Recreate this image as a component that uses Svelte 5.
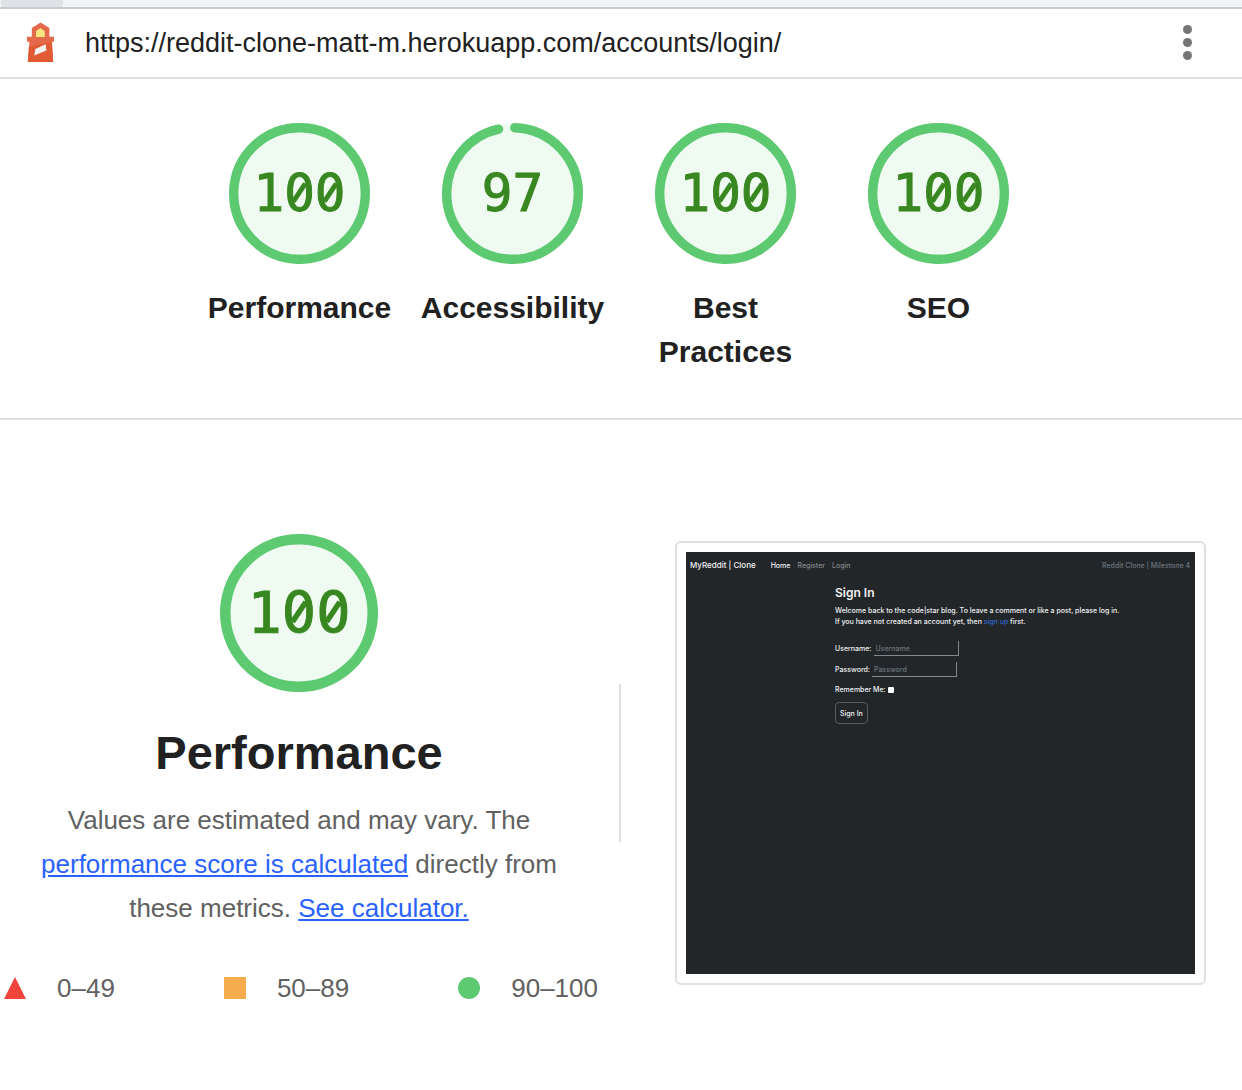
<script>
  const RADIUS = 56;
  const CIRCUMFERENCE = 2 * Math.PI * RADIUS;

  const categories = [
    { title: 'Performance', score: 100 },
    { title: 'Accessibility', score: 97 },
    { title: 'Best Practices', score: 100 },
    { title: 'SEO', score: 100 }
  ];

  function dash(score) {
    const arc = score === 100 ? CIRCUMFERENCE : (score / 100) * CIRCUMFERENCE - 4;
    return `${arc} ${CIRCUMFERENCE}`;
  }
</script>

{#snippet gauge(score)}
  <span class="gauge">
    <svg class="ring" viewBox="0 0 120 120" aria-hidden="true">
      <circle class="base" cx="60" cy="60" r="60" />
      <circle
        class="arc"
        cx="60"
        cy="60"
        r={RADIUS}
        stroke-dasharray={dash(score)}
        transform="rotate(-88 60 60)"
      />
    </svg>
    <span class="score"
      >{#each String(score) as digit}{#if digit === '0'}<span class="zero"
            >0<svg class="slash" viewBox="-15 -30 30 60" aria-hidden="true"
              ><circle class="base" cx="0" cy="-1" r="5" /><path d="M-6 8 6-10" /></svg
            ></span
          >{:else}{digit}{/if}{/each}</span
    >
  </span>
{/snippet}

<div class="tabs"><span class="tab"></span></div>

<header class="topbar">
  <svg class="logo" viewBox="0 0 27 40" aria-hidden="true">
    <path fill="#e4694a" d="M13.6.5 22.4 6v8.7H27v5h-2.4L26.200 40H.8l1.600-20.300H0v-5h4.800V6z" />
    <path fill="#e25a34" d="M2 25 24.900 19.700 26.200 40H.8z" />
    <path fill="#f6e67f" d="M9 15V9.300L13.500 6l4.300 3.300V15z" />
    <path fill="#f3f3f3" d="M8.300 27 18.700 22.300 19.400 28.500 7.200 33.500z" />
  </svg>
  <a class="url" href="https://reddit-clone-matt-m.herokuapp.com/accounts/login/"
    >https://reddit-clone-matt-m.herokuapp.com/accounts/login/</a
  >
  <button class="menu" type="button" aria-label="Open menu">
    <i></i><i></i><i></i>
  </button>
</header>

<main>
  <nav class="scores" aria-label="Category scores">
    {#each categories as category}
      <a class="category" href="#performance">
        {@render gauge(category.score)}
        <span class="label">{category.title}</span>
      </a>
    {/each}
  </nav>

  <section class="detail" id="performance">
    <div class="summary">
      <div class="large">{@render gauge(100)}</div>
      <h1>Performance</h1>
      <p>
        Values are estimated and may vary. The
        <a href="#score">performance score is calculated</a> directly from these metrics.
        <a href="#calculator">See calculator.</a>
      </p>
      <ul class="legend">
        <li>
          <svg viewBox="0 0 22 22" aria-hidden="true"><path fill="#f0443c" d="M11 0 22 22H0z" /></svg>
          0–49
        </li>
        <li>
          <svg viewBox="0 0 22 22" aria-hidden="true"><path fill="#f5ad4d" d="M0 0h22v22H0z" /></svg>
          50–89
        </li>
        <li>
          <svg viewBox="0 0 22 22" aria-hidden="true"><circle fill="#5dc971" cx="11" cy="11" r="11" /></svg>
          90–100
        </li>
      </ul>
    </div>

    <div class="divider"></div>

    <div class="frame">
      <div class="site">
        <div class="navbar">
          <a class="brand" href="#home">MyReddit | Clone</a>
          <a class="active" href="#home">Home</a>
          <a href="#register">Register</a>
          <a href="#login">Login</a>
          <span class="tagline">Reddit Clone | Milestone 4</span>
        </div>
        <form class="signin">
          <h2>Sign In</h2>
          <div class="intro">
            Welcome back to the code|star blog. To leave a comment or like a post, please log in.<br />
            If you have not created an account yet, then <a href="#signup">sign up</a> first.
          </div>
          <div class="field">
            <label for="username">Username:</label>
            <input id="username" type="text" placeholder="Username" />
          </div>
          <div class="field">
            <label for="password">Password:</label>
            <input id="password" type="password" placeholder="Password" />
          </div>
          <div class="field remember">
            <label for="remember">Remember Me:</label>
            <input id="remember" type="checkbox" />
          </div>
          <button type="button">Sign In</button>
        </form>
      </div>
    </div>
  </section>
</main>

<style>
  :global(body) {
    margin: 0;
    background: #fff;
    color: #212121;
    font-family: 'Liberation Sans', Arial, sans-serif;
    font-size: 26px;
  }

  .tabs {
    height: 7px;
    padding-left: 1px;
    background: #f1f3f4;
    border-bottom: 2px solid #c9cbce;
  }
  .tab {
    display: block;
    width: 62px;
    height: 7px;
    border-radius: 0 0 4px 4px;
    background: #dee1e6;
  }

  .topbar {
    display: flex;
    align-items: center;
    height: 66px;
    padding: 0 50px 2px 27px;
    border-bottom: 2px solid #e0e0e0;
  }
  .logo {
    width: 27px;
    height: 40px;
    margin-right: 31px;
  }
  .url {
    padding-top: 2px;
    color: #212121;
    font-size: 27px;
    text-decoration: none;
  }
  .menu {
    display: flex;
    flex-direction: column;
    gap: 4px;
    margin-left: auto;
    padding: 0;
    border: 0;
    background: none;
  }
  .menu i {
    width: 9px;
    height: 9px;
    border-radius: 50%;
    background: #757575;
  }

  .gauge {
    display: grid;
    place-items: center;
    width: 141px;
    height: 141px;
    font: 51px 'DejaVu Sans Mono', monospace;
    color: #388720;
  }
  .ring,
  .score {
    grid-area: 1 / 1;
  }
  .ring {
    width: 100%;
    height: 100%;
  }
  .score {
    -webkit-text-stroke: 1px #388720;
  }
  .zero {
    position: relative;
    display: inline-block;
  }
  /* Slash across the counter of the zero */
  .slash {
    position: absolute;
    inset: 0;
    width: 100%;
    height: 100%;
  }
  .slash path {
    fill: none;
    stroke: #388720;
    stroke-width: 5;
  }
  .base {
    fill: #effaf1;
  }
  .arc {
    fill: none;
    stroke: #5dc971;
    stroke-width: 8;
    stroke-linecap: round;
  }

  .scores {
    display: flex;
    justify-content: center;
    padding: 44px 4px 44px 0;
    border-bottom: 2px solid #e0e0e0;
  }
  .category {
    display: flex;
    flex-direction: column;
    align-items: center;
    gap: 22px;
    box-sizing: border-box;
    width: 213px;
    padding: 0 12px;
    color: #212121;
    text-decoration: none;
  }
  .label {
    max-width: 190px;
    font-size: 30px;
    font-weight: 700;
    line-height: 44px;
    text-align: center;
  }

  .detail {
    display: grid;
    grid-template-columns: 1fr 2px 1fr;
    align-items: center;
    padding: 114px 2px 80px 0;
  }
  .summary {
    display: flex;
    flex-direction: column;
    align-items: center;
    padding-right: 21px;
    color: #616161;
    line-height: 44px;
  }
  .large .gauge {
    width: 158px;
    height: 158px;
    font-size: 57px;
  }
  h1 {
    margin: 31px 0 15px;
    font-size: 47px;
    font-weight: 700;
    line-height: 60px;
    color: #212121;
  }
  p {
    max-width: 560px;
    margin: 0;
    text-align: center;
  }
  p a {
    color: #2962ff;
  }
  .legend {
    display: flex;
    justify-content: space-between;
    align-self: stretch;
    margin: 36px 0 0;
    padding: 0 0 0 4px;
    list-style: none;
  }
  .legend li {
    display: flex;
    align-items: center;
    gap: 31px;
  }
  .legend svg {
    width: 22px;
    height: 22px;
  }

  .divider {
    height: 158px;
    margin-bottom: 18px;
    background: #e0e0e0;
  }

  .frame {
    margin: 0 34px 18px 54px;
    padding: 9px;
    border: 2px solid #e0e0e0;
    border-radius: 6px;
  }
  .site {
    aspect-ratio: 509 / 422;
    overflow: hidden;
    background: #222629;
    color: #f0f1f2;
    font: 500 7px/11px Inter, sans-serif;
  }
  .navbar {
    display: flex;
    align-items: center;
    gap: 7px;
    height: 26px;
    padding: 0 5px 0 4px;
  }
  .navbar a {
    color: #85888b;
    text-decoration: none;
  }
  .navbar .brand {
    margin-right: 8px;
    color: #f0f1f2;
    font-size: 8px;
  }
  .navbar .active {
    color: #f0f1f2;
  }
  .navbar .tagline {
    margin-left: auto;
    color: #6c757d;
  }
  .signin {
    margin: 7px 0 0 149px;
  }
  h2 {
    margin: 0 0 4px;
    font-size: 12px;
    font-weight: 600;
    line-height: 16px;
  }
  .intro {
    margin-bottom: 14px;
    white-space: nowrap;
  }
  .intro a {
    color: #2f66d0;
    text-decoration: none;
  }
  .field {
    display: flex;
    align-items: center;
    gap: 2px;
    height: 15px;
    margin-bottom: 6px;
  }
  .field input[type='text'],
  .field input[type='password'] {
    box-sizing: border-box;
    width: 85px;
    height: 15px;
    padding: 0 2px;
    border: solid #85888b;
    border-width: 0 1px 1px 0;
    background: none;
    color: inherit;
    font: inherit;
  }
  .field input::placeholder {
    color: #6c757d;
  }
  .field input[type='checkbox'] {
    appearance: none;
    width: 6px;
    height: 6px;
    margin: 0;
    border-radius: 1px;
    background: #fff;
  }
  .remember {
    height: 13px;
  }
  .signin button {
    height: 22px;
    padding: 0 4px;
    border: 1px solid #565b60;
    border-radius: 4px;
    background: none;
    color: inherit;
    font: inherit;
  }
</style>
